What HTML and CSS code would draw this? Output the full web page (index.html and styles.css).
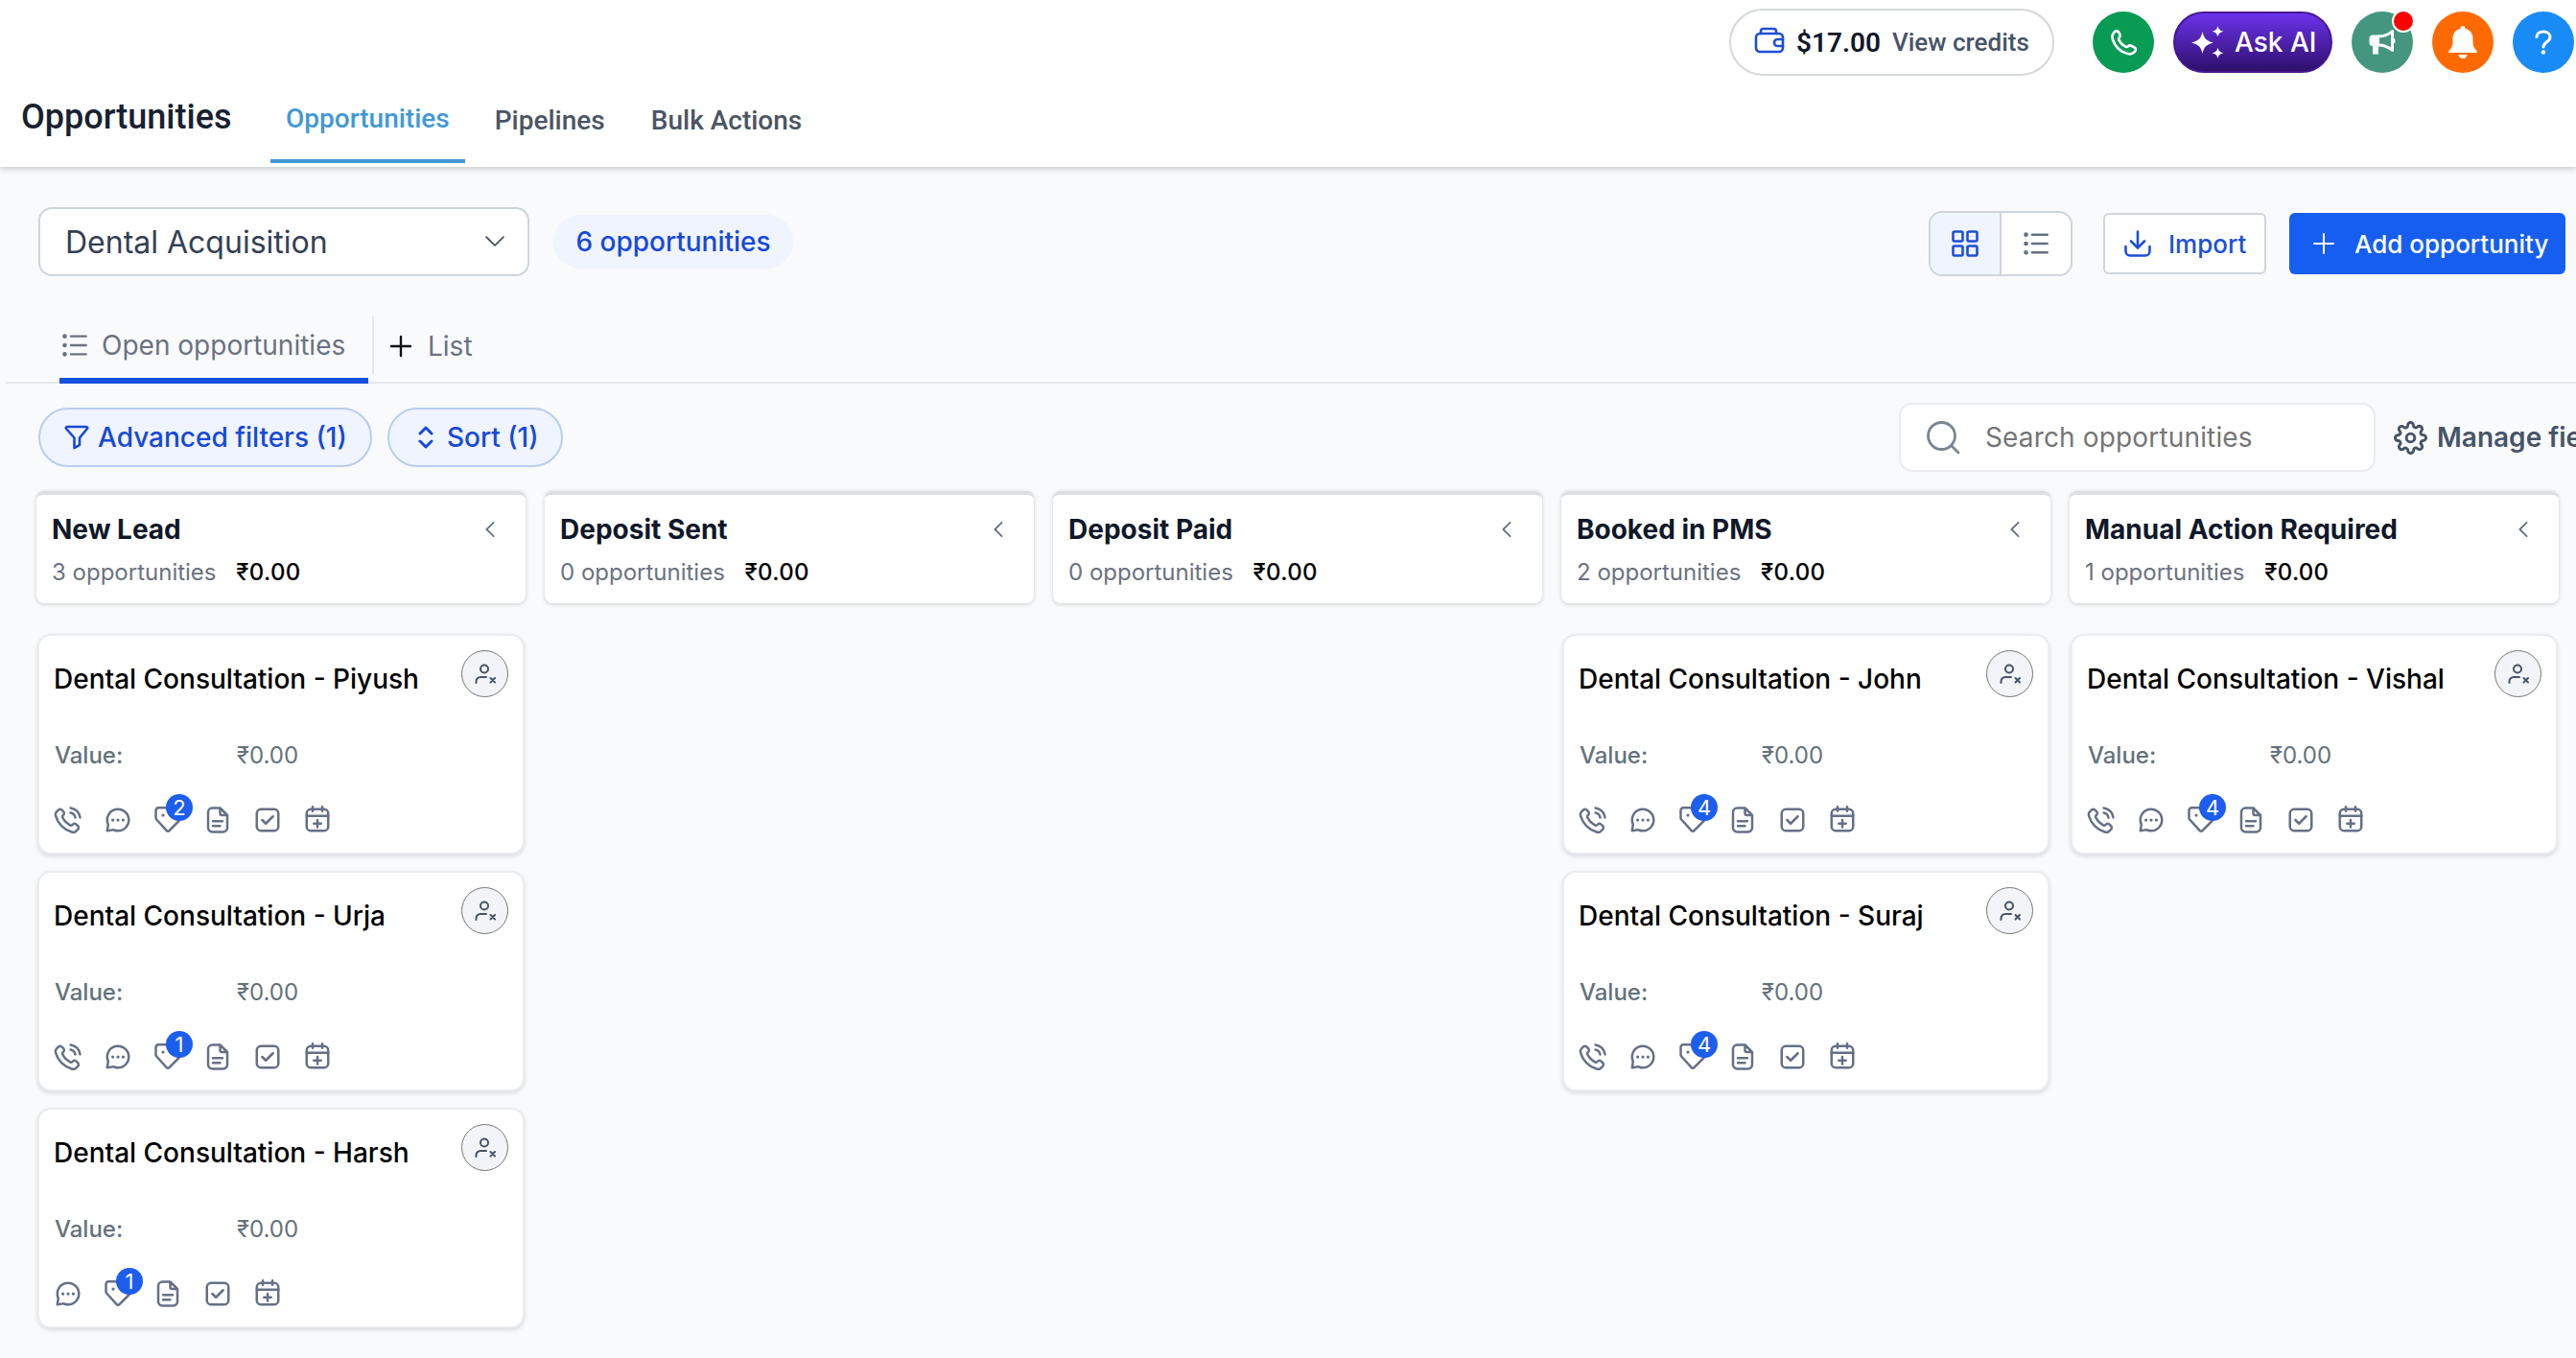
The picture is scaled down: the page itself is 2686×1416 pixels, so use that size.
FILE: index.html
```html
<!DOCTYPE html>
<html lang="en">
<head>
    <meta charset="UTF-8">
    <meta name="viewport" content="width=device-width, initial-scale=1.0">
    <title>Opportunities</title>
    <link rel="stylesheet" href="styles.css">
</head>
<body>

    <!-- Icon set -->
    <svg class="sprite" width="0" height="0">
        <symbol id="i-call" viewBox="0 0 24 24">
            <path d="M14.05 6A5 5 0 0 1 18 9.95M14.05 2A9 9 0 0 1 22 9.94M10.227 13.863a14.604 14.604 0 0 1-2.847-4.01c-.067-.139-.1-.208-.126-.296a1.231 1.231 0 0 1 .169-.992c.051-.075.115-.138.242-.265.389-.389.583-.583.71-.779a2 2 0 0 0 0-2.18c-.127-.195-.321-.39-.71-.779l-.217-.216c-.59-.591-.886-.887-1.203-1.048a2 2 0 0 0-1.808 0c-.317.16-.612.457-1.203 1.048l-.175.175c-.59.589-.884.883-1.109 1.284-.249.444-.428 1.135-.427 1.644.002.459.09.773.268 1.4a19.038 19.038 0 0 0 4.874 8.283 19.04 19.04 0 0 0 8.283 4.873c.628.178.942.267 1.4.268a3.93 3.93 0 0 0 1.644-.427c.4-.225.695-.52 1.284-1.109l.175-.175c.59-.59.886-.886 1.047-1.203a2 2 0 0 0 0-1.808c-.16-.317-.456-.612-1.047-1.203l-.217-.217c-.389-.389-.583-.583-.779-.71a2 2 0 0 0-2.18 0c-.195.127-.39.321-.779.71-.127.127-.19.19-.265.242a1.23 1.23 0 0 1-.993.17c-.087-.026-.156-.06-.295-.126a14.605 14.605 0 0 1-4.01-2.848Z"/>
        </symbol>
        <symbol id="i-chat" viewBox="0 0 24 24">
            <path d="M12 21a9 9 0 1 0-8.4-5.8c.15.4.2.6.2.8s0 .4-.1.7L3 21l4.3-.7c.3 0 .5-.1.7-.1s.4.1.8.2c1 .4 2.100.6 3.200.6Z"/>
            <path class="dots" d="M7.700 12h.01M12 12h.01M16.300 12h.01"/>
        </symbol>
        <symbol id="i-tag" viewBox="0 0 24 24">
            <path d="M2 4.200v5.500c0 .5 0 .7.060 1 .1.300.2.500.5.900l8.400 9.300c.6.700 1.600.700 2.200 0l7.900-7.900c.7-.7.7-1.500 0-2.200l-9.300-8.400c-.4-.3-.6-.4-.9-.5-.3-.060-.5-.060-1-.060H4.200A2.200 2.200 0 0 0 2 4.200Z"/>
            <path class="dots" d="M8 8h.01"/>
        </symbol>
        <symbol id="i-doc" viewBox="0 0 24 24">
            <path d="M14 2.300V6.400c0 .9.700 1.600 1.600 1.600h4.100M8 13h8M8 17h6M14 2H7.500A3.500 3.500 0 0 0 4 5.500v13A3.500 3.500 0 0 0 7.500 22h9a3.500 3.500 0 0 0 3.500-3.500V8Z"/>
        </symbol>
        <symbol id="i-check" viewBox="0 0 24 24">
            <rect x="3" y="3" width="18" height="18" rx="3.500"/>
            <path d="m7.500 12 3 3 6-6"/>
        </symbol>
        <symbol id="i-cal" viewBox="0 0 24 24">
            <path d="M21 8.500H3M16 1V4.500M8 1V4.500M12 18v-6M9 15h6"/>
            <rect x="3" y="3" width="18" height="18" rx="3.500"/>
        </symbol>
        <symbol id="i-user-x" viewBox="0 0 24 24">
            <circle cx="11" cy="6.500" r="4"/>
            <path d="M2.500 21v-1.500a4.500 4.500 0 0 1 4.500-4.500h6M17.500 16l4.500 4.500M22 16l-4.500 4.500"/>
        </symbol>
        <symbol id="i-left" viewBox="0 0 12 20">
            <path d="M10 2 2 10l8 8"/>
        </symbol>
        <symbol id="i-list" viewBox="0 0 24 24">
            <path d="M8.500 4h13.500M8.500 12h13.500M8.500 20h13.500"/>
            <path class="bullets" d="M3 4h.01M3 12h.01M3 20h.01"/>
        </symbol>
        <symbol id="i-plus" viewBox="0 0 24 24">
            <path d="M12 2v20M2 12h20"/>
        </symbol>
    </svg>

    <!-- Header -->
    <header class="header">
        <div class="topbar">
            <div class="credits">
                <svg class="wallet" viewBox="0 0 32 28">
                    <path d="M7 7V4.500A2.500 2.500 0 0 1 9.500 2h11A2.500 2.500 0 0 1 23 4.500V7"/>
                    <rect x="2" y="7" width="28" height="19" rx="4"/>
                    <path d="M30 13h-5.500a3.500 3.500 0 0 0 0 7H30"/>
                </svg>
                <b>$17.00</b>
                <span>View credits</span>
            </div>
            <div class="round green">
                <svg class="phone" viewBox="0 0 28 28">
                    <path d="M4.500 3.200c1.300-1.500 3.500-1.200 4.500.4l1 2c.7 1.300.3 2.300-.6 3.300-.7.800-.8 1.500-.3 2.500 1.400 2.800 3.600 5 6.600 6.600 1 .5 1.800.5 2.600-.3 1-.9 2.100-1.100 3.400-.5l3 1.600c1.500 1 1.700 3 .3 4.300-1.800 1.900-4.300 2.800-6.900 2C10 23.100 4.500 17.500 2.500 9.500c-.6-2.400.3-4.500 2-6.300Z"/>
                </svg>
            </div>
            <div class="ask">
                <svg class="sparkle" viewBox="0 0 34 34">
                    <path d="M11.500 6c1.700 7.300 3.700 9.300 11.500 11.500-7.800 2.200-9.800 4.200-11.500 11.500C9.800 21.700 7.800 19.700 0 17.500 7.800 15.300 9.800 13.300 11.500 6Z"/>
                    <path d="M27.500 0c.9 3.700 2 4.700 6 5.800-4 1.100-5.100 2.100-6 5.800-.9-3.700-2-4.700-6-5.800 4-1.100 5.100-2.100 6-5.800ZM27.500 22.500c.9 3.700 2 4.700 6 5.800-4 1.100-5.100 2.100-6 5.700-.9-3.600-2-4.600-6-5.700 4-1.100 5.100-2.100 6-5.800Z"/>
                </svg>
                Ask AI
            </div>
            <div class="round teal">
                <svg class="horn" viewBox="0 0 28 28">
                    <path class="solid" d="M11 6.500H4A3.500 3.500 0 0 0 .500 10v4.500A3.500 3.500 0 0 0 4 18v8.500h6V18h1Z"/>
                    <path d="M10 8c5.500 0 10-1.500 14.500-5.500v20C20 18.500 15.500 17 10 17"/>
                    <path class="solid" d="M25.500 9.500c1.500.5 2 1.500 2 3s-.5 2.500-2 3Z"/>
                </svg>
                <i class="dot"></i>
            </div>
            <div class="round orange">
                <svg class="bell" viewBox="0 0 30 34">
                    <path d="M15 0a2.500 2.500 0 0 0-2.500 2.500v.6C7.500 4.200 4.500 8 4.500 13v4c0 4-1.500 6.500-4 9-.8.800-.4 2 .8 2h27.400c1.200 0 1.600-1.200.8-2-2.500-2.500-4-5-4-9v-4c0-5-3-8.800-8-9.900v-.6A2.500 2.500 0 0 0 15 0ZM10.500 30h9c-.4 2.500-2.100 4-4.500 4s-4.100-1.500-4.500-4Z"/>
                </svg>
            </div>
            <div class="round blue">
                <svg class="help" viewBox="0 0 18 26">
                    <path d="M2 7.500C2.300 4.200 5 2 9 2s7 2.300 7 5.700c0 5.300-7 4.800-7 10.300"/>
                    <circle cx="9" cy="23.500" r="2.200"/>
                </svg>
            </div>
        </div>

        <nav class="nav">
            <h1>Opportunities</h1>
            <a class="nav-tab active">Opportunities</a>
            <a class="nav-tab">Pipelines</a>
            <a class="nav-tab">Bulk Actions</a>
        </nav>
    </header>

    <!-- Pipeline picker and actions -->
    <div class="toolbar">
        <div class="select">
            <span>Dental Acquisition</span>
            <svg viewBox="0 0 20 12"><path d="m1 1 9 9 9-9"/></svg>
        </div>
        <div class="count">6 opportunities</div>

        <div class="toggle">
            <div class="on">
                <svg viewBox="0 0 28 28">
                    <rect x="1.500" y="1.500" width="10" height="10" rx="1.500"/>
                    <rect x="16.500" y="1.500" width="10" height="10" rx="1.500"/>
                    <rect x="1.500" y="16.500" width="10" height="10" rx="1.500"/>
                    <rect x="16.500" y="16.500" width="10" height="10" rx="1.500"/>
                </svg>
            </div>
            <div class="off"><svg><use href="#i-list"/></svg></div>
        </div>
        <div class="btn import">
            <svg viewBox="0 0 28 28"><path d="M14 1.500V18M7 11.500l7 7 7-7M1.500 17v5a4.500 4.500 0 0 0 4.500 4.500h16a4.500 4.500 0 0 0 4.500-4.500v-5"/></svg>
            Import
        </div>
        <div class="btn add">
            <svg><use href="#i-plus"/></svg>
            Add opportunity
        </div>
    </div>

    <!-- Saved lists -->
    <div class="lists">
        <div class="list-tab"><svg><use href="#i-list"/></svg>Open opportunities</div>
        <div class="list-new"><svg><use href="#i-plus"/></svg>List</div>
    </div>

    <!-- Filters -->
    <div class="filters">
        <div class="chip">
            <svg class="funnel" viewBox="0 0 26 26"><path d="M3 2h20c1.200 0 1.600 1.200.9 2L16 13.500V21l-5.500 3.200V13.500L2.100 4c-.7-.8-.3-2 .9-2Z"/></svg>
            Advanced filters (1)
        </div>
        <div class="chip sort">
            <svg class="updown" viewBox="0 0 16 24"><path d="m2 8 6-6 6 6M2 16l6 6 6-6"/></svg>
            Sort (1)
        </div>
        <div class="search">
            <svg viewBox="0 0 36 36"><circle cx="16.500" cy="16.500" r="14"/><path d="m27 27 7 7"/></svg>
            Search opportunities
        </div>
        <div class="manage">
            <svg viewBox="0 0 24 24"><circle cx="12" cy="12" r="3"/><path d="M19.400 15a1.650 1.650 0 0 0 .33 1.820l.06.06a2 2 0 0 1 0 2.830 2 2 0 0 1-2.830 0l-.06-.06a1.650 1.650 0 0 0-1.820-.33 1.650 1.650 0 0 0-1 1.510V21a2 2 0 0 1-2 2 2 2 0 0 1-2-2v-.09A1.650 1.650 0 0 0 9 19.400a1.650 1.650 0 0 0-1.820.33l-.06.06a2 2 0 0 1-2.830 0 2 2 0 0 1 0-2.830l.06-.06a1.650 1.650 0 0 0 .33-1.820 1.650 1.650 0 0 0-1.510-1H3a2 2 0 0 1-2-2 2 2 0 0 1 2-2h.09A1.650 1.650 0 0 0 4.600 9a1.650 1.650 0 0 0-.33-1.820l-.06-.06a2 2 0 0 1 0-2.830 2 2 0 0 1 2.830 0l.06.06a1.650 1.650 0 0 0 1.820.33H9a1.650 1.650 0 0 0 1-1.510V3a2 2 0 0 1 2-2 2 2 0 0 1 2 2v.09a1.650 1.650 0 0 0 1 1.510 1.650 1.650 0 0 0 1.820-.33l.06-.06a2 2 0 0 1 2.830 0 2 2 0 0 1 0 2.830l-.06.06a1.650 1.650 0 0 0-.33 1.820V9a1.650 1.650 0 0 0 1.510 1H21a2 2 0 0 1 2 2 2 2 0 0 1-2 2h-.09a1.650 1.650 0 0 0-1.510 1z"/></svg>
            Manage fields
        </div>
    </div>

    <!-- Board -->
    <main class="board">

        <section class="column">
            <div class="stage">
                <h2>New Lead</h2>
                <svg><use href="#i-left"/></svg>
                <p>3 opportunities <b>₹0.00</b></p>
            </div>
            <article class="card">
                <div class="card-top">
                    <h3>Dental Consultation - Piyush</h3>
                    <div class="owner"><svg><use href="#i-user-x"/></svg></div>
                </div>
                <div class="value"><b>Value:</b><span>₹0.00</span></div>
                <div class="icons">
                    <svg><use href="#i-call"/></svg>
                    <svg><use href="#i-chat"/></svg>
                    <div class="tag"><svg><use href="#i-tag"/></svg><i>2</i></div>
                    <svg><use href="#i-doc"/></svg>
                    <svg><use href="#i-check"/></svg>
                    <svg><use href="#i-cal"/></svg>
                </div>
            </article>
            <article class="card">
                <div class="card-top">
                    <h3>Dental Consultation - Urja</h3>
                    <div class="owner"><svg><use href="#i-user-x"/></svg></div>
                </div>
                <div class="value"><b>Value:</b><span>₹0.00</span></div>
                <div class="icons">
                    <svg><use href="#i-call"/></svg>
                    <svg><use href="#i-chat"/></svg>
                    <div class="tag"><svg><use href="#i-tag"/></svg><i>1</i></div>
                    <svg><use href="#i-doc"/></svg>
                    <svg><use href="#i-check"/></svg>
                    <svg><use href="#i-cal"/></svg>
                </div>
            </article>
            <article class="card">
                <div class="card-top">
                    <h3>Dental Consultation - Harsh</h3>
                    <div class="owner"><svg><use href="#i-user-x"/></svg></div>
                </div>
                <div class="value"><b>Value:</b><span>₹0.00</span></div>
                <div class="icons">
                    <svg><use href="#i-chat"/></svg>
                    <div class="tag"><svg><use href="#i-tag"/></svg><i>1</i></div>
                    <svg><use href="#i-doc"/></svg>
                    <svg><use href="#i-check"/></svg>
                    <svg><use href="#i-cal"/></svg>
                </div>
            </article>
        </section>

        <section class="column">
            <div class="stage">
                <h2>Deposit Sent</h2>
                <svg><use href="#i-left"/></svg>
                <p>0 opportunities <b>₹0.00</b></p>
            </div>
        </section>

        <section class="column">
            <div class="stage">
                <h2>Deposit Paid</h2>
                <svg><use href="#i-left"/></svg>
                <p>0 opportunities <b>₹0.00</b></p>
            </div>
        </section>

        <section class="column">
            <div class="stage">
                <h2>Booked in PMS</h2>
                <svg><use href="#i-left"/></svg>
                <p>2 opportunities <b>₹0.00</b></p>
            </div>
            <article class="card">
                <div class="card-top">
                    <h3>Dental Consultation - John</h3>
                    <div class="owner"><svg><use href="#i-user-x"/></svg></div>
                </div>
                <div class="value"><b>Value:</b><span>₹0.00</span></div>
                <div class="icons">
                    <svg><use href="#i-call"/></svg>
                    <svg><use href="#i-chat"/></svg>
                    <div class="tag"><svg><use href="#i-tag"/></svg><i>4</i></div>
                    <svg><use href="#i-doc"/></svg>
                    <svg><use href="#i-check"/></svg>
                    <svg><use href="#i-cal"/></svg>
                </div>
            </article>
            <article class="card">
                <div class="card-top">
                    <h3>Dental Consultation - Suraj</h3>
                    <div class="owner"><svg><use href="#i-user-x"/></svg></div>
                </div>
                <div class="value"><b>Value:</b><span>₹0.00</span></div>
                <div class="icons">
                    <svg><use href="#i-call"/></svg>
                    <svg><use href="#i-chat"/></svg>
                    <div class="tag"><svg><use href="#i-tag"/></svg><i>4</i></div>
                    <svg><use href="#i-doc"/></svg>
                    <svg><use href="#i-check"/></svg>
                    <svg><use href="#i-cal"/></svg>
                </div>
            </article>
        </section>

        <section class="column">
            <div class="stage">
                <h2>Manual Action Required</h2>
                <svg><use href="#i-left"/></svg>
                <p>1 opportunities <b>₹0.00</b></p>
            </div>
            <article class="card">
                <div class="card-top">
                    <h3>Dental Consultation - Vishal</h3>
                    <div class="owner"><svg><use href="#i-user-x"/></svg></div>
                </div>
                <div class="value"><b>Value:</b><span>₹0.00</span></div>
                <div class="icons">
                    <svg><use href="#i-call"/></svg>
                    <svg><use href="#i-chat"/></svg>
                    <div class="tag"><svg><use href="#i-tag"/></svg><i>4</i></div>
                    <svg><use href="#i-doc"/></svg>
                    <svg><use href="#i-check"/></svg>
                    <svg><use href="#i-cal"/></svg>
                </div>
            </article>
        </section>

    </main>

</body>
</html>
```
FILE: styles.css
```css
* {
    box-sizing: border-box;
}

body {
    margin: 0;
    height: 1416px;
    overflow: hidden;
    background: #f9fafb;
    color: #101828;
    font-family: Inter, sans-serif;
    font-size: 28px;
    white-space: nowrap;
}

h1, h2, h3, p {
    margin: 0;
}

i {
    font-style: normal;
}

svg {
    display: block;
    flex: none;
    fill: none;
    stroke: currentColor;
    stroke-width: 2;
    stroke-linecap: round;
    stroke-linejoin: round;
}

.sprite {
    position: absolute;
}

.dots {
    stroke-width: 2.6;
}

.bullets {
    stroke-width: 4;
}

/* Header */
.header {
    height: 174px;
    background: #fff;
    box-shadow: 0 1px 6px 1px rgba(0, 0, 0, 0.2);
    font-family: Roboto, sans-serif;
}

.topbar {
    display: flex;
    justify-content: flex-end;
    align-items: center;
    gap: 20px;
    height: 88px;
    padding-right: 2px;
}

.credits {
    display: flex;
    align-items: center;
    width: 339px;
    height: 70px;
    margin-right: 20px;
    padding-left: 24px;
    border: 2px solid #d5d8d8;
    border-radius: 35px;
}

.credits b {
    margin: 0 12px 0 12px;
    font-weight: 600;
}

.credits span {
    font-size: 26px;
    font-weight: 500;
    color: #475467;
}

.wallet {
    width: 32px;
    height: 28px;
    margin-top: -4px;
    color: #1d4fd7;
    stroke-width: 2.6;
}

.round {
    position: relative;
    display: flex;
    align-items: center;
    justify-content: center;
    width: 64px;
    height: 64px;
    border-radius: 50%;
    color: #fff;
}

.green { background: #079b54; }
.teal { background: #45967f; }
.orange { background: #ff6a00; }
.blue { background: #188bf6; }

.phone {
    width: 29px;
    height: 29px;
    stroke-width: 2.6;
}

.ask {
    display: flex;
    align-items: center;
    gap: 11px;
    width: 166px;
    height: 64px;
    padding-left: 17px;
    border: 2px solid #45198f;
    border-radius: 32px;
    background: linear-gradient(#6c33ec, #2e0f6b);
    color: #fff;
    font-family: Inter, sans-serif;
    font-weight: 450;
}

.sparkle {
    width: 34px;
    height: 34px;
    fill: #fff;
    stroke: none;
}

.horn {
    width: 28px;
    height: 28px;
    stroke-width: 3;
}

.horn .solid {
    fill: #fff;
    stroke: none;
}

.dot {
    position: absolute;
    top: -2px;
    right: -2px;
    width: 24px;
    height: 24px;
    border: 2px solid #fff;
    border-radius: 50%;
    background: #f00;
}

.bell {
    width: 30px;
    height: 34px;
    fill: #fff;
    stroke: none;
}

.help {
    width: 18px;
    height: 26px;
    stroke-width: 3;
}

.help circle {
    fill: #fff;
    stroke: none;
}

.nav {
    display: flex;
    padding: 12px 0 0 22px;
}

.nav h1 {
    width: 260px;
    font-size: 36px;
    font-weight: 500;
    line-height: 44px;
    color: #18212f;
}

.nav-tab {
    height: 70px;
    padding: 0 16px;
    font-weight: 500;
    line-height: 52px;
    color: #4b5563;
}

.nav-tab.active {
    margin-right: 15px;
    border-bottom: 4px solid #4299d4;
    line-height: 48px;
    color: #4299d4;
}

.nav-tab + .nav-tab:last-child {
    margin-left: 16px;
}

/* Pipeline picker and actions */
.toolbar {
    display: flex;
    align-items: center;
    height: 68px;
    margin-top: 46px;
    padding: 0 11px 0 40px;
}

.select {
    display: flex;
    align-items: center;
    justify-content: space-between;
    width: 512px;
    height: 72px;
    margin-top: -4px;
    padding: 0 24px 0 26px;
    border: 2px solid #cdd5da;
    border-radius: 14px;
    background: #fff;
    font-size: 32px;
    color: #344054;
}

.select svg {
    width: 20px;
    height: 12px;
    stroke-width: 1.6;
}

.count {
    width: 250px;
    margin: -4px 0 0 25px;
    border-radius: 28px;
    background: #eff4ff;
    font-weight: 500;
    line-height: 56px;
    text-align: center;
    color: #1849d6;
}

.toggle {
    display: flex;
    width: 150px;
    height: 68px;
    margin-left: auto;
    overflow: hidden;
    border: 2px solid #d0d5dd;
    border-radius: 14px;
    background: #fff;
}

.toggle div {
    display: flex;
    flex: 1;
    align-items: center;
    justify-content: center;
}

.toggle .on {
    border-right: 2px solid #d0d5dd;
    background: #eff4ff;
    color: #1d4fd7;
}

.toggle .off {
    color: #667085;
}

.toggle svg {
    width: 28px;
    height: 28px;
    stroke-width: 2.6;
}

.toggle .off svg {
    stroke-width: 2.2;
}

.btn {
    display: flex;
    align-items: center;
    height: 64px;
    border-radius: 6px;
    font-size: 26px;
    font-weight: 500;
}

.import {
    gap: 18px;
    width: 170px;
    margin-left: 32px;
    padding-left: 20px;
    border: 2px solid #d0d5dd;
    background: #fff;
    color: #1d4fd7;
}

.import svg {
    width: 28px;
    height: 28px;
    stroke-width: 2.6;
}

.add {
    gap: 20px;
    width: 288px;
    margin-left: 24px;
    padding-left: 24px;
    background: #155eef;
    color: #fff;
}

.add svg {
    width: 24px;
    height: 24px;
}

/* Saved lists */
.lists {
    display: flex;
    align-items: flex-end;
    height: 112px;
    margin-left: 6px;
    padding-left: 56px;
    border-bottom: 2px solid #e6e8ec;
    color: #6b7280;
}

.list-tab {
    display: flex;
    align-items: center;
    gap: 14px;
    width: 322px;
    height: 74px;
    margin-bottom: -2px;
    padding-left: 2px;
    border-bottom: 6px solid #1350e0;
}

.list-tab svg {
    width: 28px;
    height: 28px;
}

.list-new {
    display: flex;
    align-items: center;
    gap: 16px;
    height: 61px;
    margin: 0 0 7px 4px;
    padding-left: 16px;
    border-left: 2px solid #e6e8ec;
}

.list-new svg {
    width: 24px;
    height: 24px;
    color: #111;
    stroke-width: 2.4;
}

/* Filters */
.filters {
    display: flex;
    align-items: center;
    height: 72px;
    margin-top: 20px;
    padding-left: 40px;
}

.chip {
    display: flex;
    align-items: center;
    gap: 9px;
    width: 348px;
    height: 62px;
    padding-left: 25px;
    border: 2px solid #b9cdee;
    border-radius: 31px;
    background: #eff4ff;
    font-weight: 500;
    color: #1849d6;
}

.chip.sort {
    gap: 14px;
    width: 183px;
    margin-left: 16px;
    padding-left: 30px;
}

.funnel {
    width: 26px;
    height: 26px;
    stroke-width: 2.6;
}

.updown {
    width: 16px;
    height: 26px;
    stroke-width: 3;
}

.search {
    display: flex;
    align-items: center;
    gap: 26px;
    width: 497px;
    height: 72px;
    margin-left: auto;
    padding-left: 26px;
    border: 2px solid #eaecf0;
    border-radius: 14px;
    background: #fff;
    letter-spacing: 0.15px;
    color: #757575;
}

.search svg {
    width: 36px;
    height: 36px;
    color: #7b858f;
    stroke-width: 2.8;
}

.manage {
    display: flex;
    align-items: center;
    gap: 10px;
    width: 190px;
    margin-left: 19px;
    font-weight: 600;
    color: #475467;
}

.manage svg {
    width: 35px;
    height: 35px;
}

/* Board */
.board {
    display: flex;
    gap: 20px;
    margin-top: 20px;
    padding-left: 38px;
}

.column {
    flex: none;
    width: 510px;
}

.stage {
    display: grid;
    grid-template-columns: 1fr auto;
    align-items: center;
    height: 117px;
    margin-bottom: 32px;
    padding: 12px 31px 12px 16px;
    border-top: 4px solid #dcdee0;
    border-radius: 8px;
    background: #fff;
    box-shadow: 0 1px 4px rgba(16, 24, 40, 0.2);
}

.stage h2 {
    font-size: 28px;
    font-weight: 650;
}

.stage svg {
    width: 12px;
    height: 18px;
    color: #667085;
}

.stage p {
    font-size: 24px;
    color: #6b7280;
}

.stage b {
    margin-left: 14px;
    font-weight: 500;
    letter-spacing: 0.3px;
    color: #000;
}

.card {
    width: 508px;
    height: 230px;
    margin: 0 0 17px 1px;
    padding: 15px 15px 0;
    border: 2px solid #eaecf0;
    border-radius: 14px;
    background: #fff;
    box-shadow: 0 2px 4px rgba(16, 24, 40, 0.14);
}

.card-top {
    display: flex;
    justify-content: space-between;
    height: 90px;
}

.card h3 {
    font-size: 28px;
    font-weight: 500;
    line-height: 61px;
    color: #000;
}

.owner {
    display: flex;
    align-items: center;
    justify-content: center;
    width: 49px;
    height: 49px;
    border: 1px solid #777;
    border-radius: 50%;
    background: #f2f4f7;
    color: #475467;
}

.owner svg {
    width: 24px;
    height: 24px;
}

.value {
    display: flex;
    height: 40px;
    padding-left: 1px;
    font-size: 24px;
    line-height: 40px;
    color: #64727a;
}

.value b {
    width: 190px;
    font-weight: 550;
}

.icons {
    display: flex;
    gap: 22px;
    margin-top: 32px;
    color: #667085;
}

.icons svg {
    width: 30px;
    height: 30px;
}

.tag {
    position: relative;
}

.tag i {
    position: absolute;
    top: -12px;
    left: 13px;
    width: 28px;
    height: 28px;
    border-radius: 50%;
    background: #1d5eee;
    font-size: 22px;
    line-height: 28px;
    text-align: center;
    color: #fff;
}
```
